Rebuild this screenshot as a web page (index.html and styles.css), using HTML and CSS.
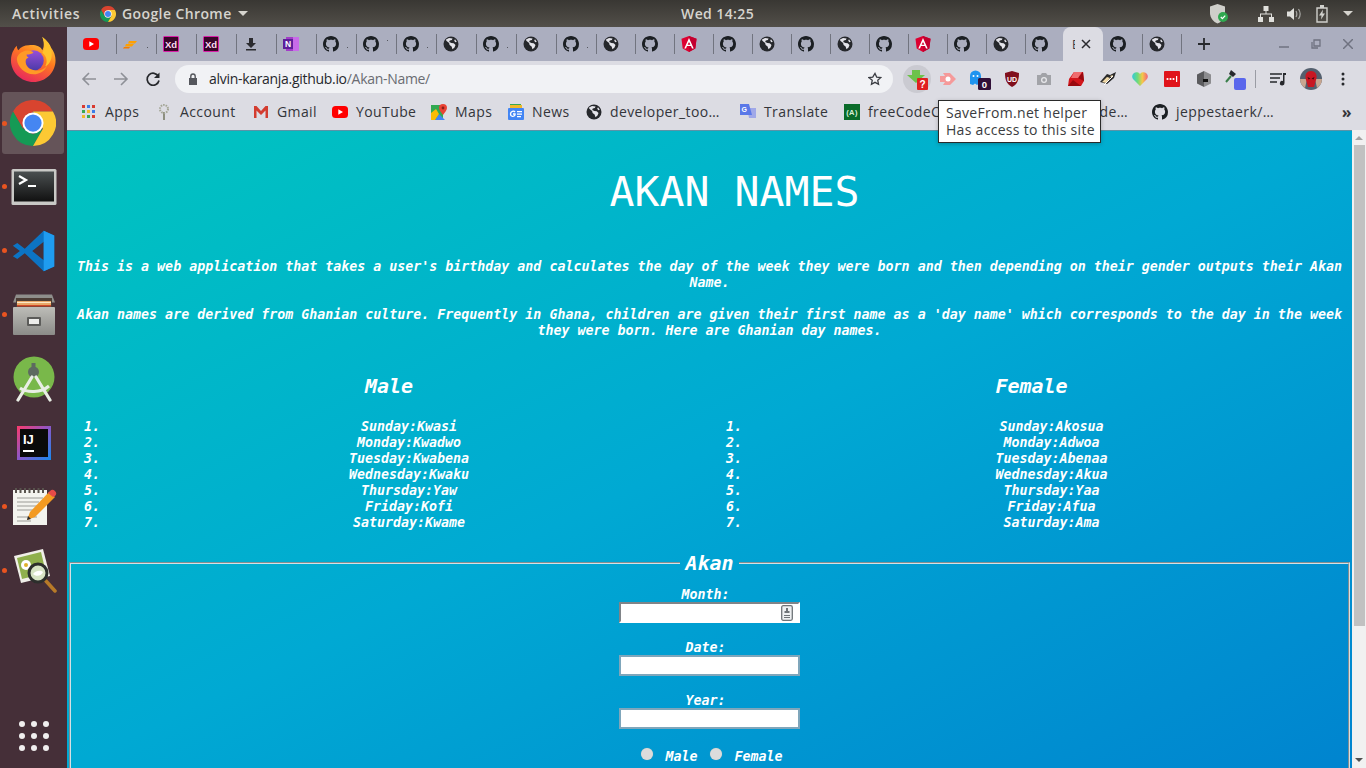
FILE: index.html
```html
<!DOCTYPE html>
<html lang="en">

<head>
    <meta charset="UTF-8">
    <meta name="viewport" content="width=device-width, initial-scale=1.0">
    <title>Akan Names</title>
    <link rel="stylesheet" href="styles.css">
</head>

<body>
    <!-- shared icons -->
    <svg class="icon-defs" aria-hidden="true">
        <defs>
            <symbol id="gh" viewBox="0 0 16 16">
                <path fill="#1b1f23" d="M8 0C3.58 0 0 3.58 0 8c0 3.54 2.29 6.53 5.47 7.59.4.07.55-.17.55-.38 0-.19-.01-.82-.01-1.49-2.01.37-2.53-.49-2.69-.94-.09-.23-.48-.94-.82-1.13-.28-.15-.68-.52-.01-.53.63-.01 1.08.58 1.23.82.72 1.21 1.87.87 2.33.66.07-.52.28-.87.51-1.07-1.78-.2-3.64-.89-3.64-3.95 0-.87.31-1.59.82-2.15-.08-.2-.36-1.02.08-2.12 0 0 .67-.21 2.2.82.64-.18 1.32-.27 2-.27.68 0 1.36.09 2 .27 1.53-1.04 2.2-.82 2.2-.82.44 1.1.16 1.92.08 2.12.51.56.82 1.27.82 2.15 0 3.07-1.87 3.75-3.65 3.95.29.25.54.73.54 1.48 0 1.07-.01 1.93-.01 2.2 0 .21.15.46.55.38A8.013 8.013 0 0016 8c0-4.42-3.58-8-8-8z" />
            </symbol>
            <symbol id="globe" viewBox="0 0 16 16">
                <circle cx="8" cy="8" r="7.5" fill="#26282c" />
                <path fill="#e4e4ea" d="M3 3.5l3-1.6 3.6.5-.8 1.7-2 .3-.6 1.6 2.2 1.1 2.3.2 1.8 1.6-1 2.7-2 1.6-.9-2.7-2-1.4-.5-2.2L3.300 4.800zM12 3.200l1.800 2.600-1.600.4-1-1.800z" />
            </symbol>
            <symbol id="xd" viewBox="0 0 16 16">
                <rect width="16" height="16" rx="1.500" fill="#d81fa8" />
                <rect x="1" y="1" width="14" height="14" fill="#3a0529" />
                <text x="8" y="11.500" text-anchor="middle" font-family="Liberation Sans, sans-serif" font-size="9.500" font-weight="700" fill="#ffd9f2">Xd</text>
            </symbol>
            <symbol id="angular" viewBox="0 0 16 16">
                <path fill="#dd0031" d="M8 0L.5 2.700l1.200 9.800L8 16l6.300-3.500 1.200-9.800z" />
                <path fill="#c3002f" d="M8 0v16l6.300-3.500 1.200-9.800z" />
                <path fill="#fff" d="M8 2L3.300 12.400h1.700l1-2.300h4l1 2.300h1.700zm0 3.900l1.400 2.900H6.600z" />
            </symbol>
            <symbol id="youtube" viewBox="0 0 16 16">
                <rect y="2" width="16" height="12" rx="3.500" fill="#f00" />
                <path fill="#fff" d="M6.300 5.200L11 8l-4.700 2.800z" />
            </symbol>
            <symbol id="chrome" viewBox="0 0 48 48">
                <path fill="#d8442f" d="M3.200 12A24 24 0 0 1 44.800 12L24 12 13.600 30z" />
                <path fill="#159a55" d="M3.200 12L13.600 30 24 36 34.400 30 24 48A24 24 0 0 1 3.200 12z" />
                <path fill="#fcc934" d="M44.800 12L24 12 34.400 30 24 48A24 24 0 0 0 44.800 12z" />
                <circle cx="24" cy="24" r="11" fill="#fff" />
                <circle cx="24" cy="24" r="9" fill="#4586f2" />
            </symbol>
        </defs>
    </svg>

    <header class="topbar">
        <span class="topbar-item activities">Activities</span>
        <svg class="app-chrome" width="16" height="16"><use href="#chrome" /></svg>
        <span class="topbar-item">Google Chrome</span>
        <span class="caret"></span>
        <span class="clock">Wed 14:25</span>
        <div class="tray">
            <svg class="tray-shield" width="20" height="22" viewBox="0 0 20 22">
                <path fill="#cfcfca" d="M8.500 1L1 3.500V10c0 5 3.500 9 7.500 10.500 1.500-.5 3-1.500 4-3L16 10V3.500z" />
                <circle cx="14" cy="14" r="5" fill="#2fa84f" />
                <path fill="none" stroke="#fff" stroke-width="1.300" d="M11.800 14l1.600 1.600 2.800-3" />
            </svg>
            <svg class="tray-net" width="16" height="16" viewBox="0 0 16 16">
                <path fill="#e0e0dc" d="M5.500 0h5v5h-2v2.500H14V11h2v5h-5v-5h2V8.500H3V11h2v5H0v-5h2V7.500h5.500V5h-2z" />
            </svg>
            <svg class="tray-vol" width="16" height="16" viewBox="0 0 16 16">
                <path fill="#e0e0dc" d="M1 5.500h3L8 2v12l-4-3.500H1z" />
                <path fill="none" stroke="#a9a9a5" stroke-width="1.200" d="M10 5c1 1.800 1 4.200 0 6M12.500 3c2 3 2 7 0 10" />
            </svg>
            <svg class="tray-bat" width="12" height="18" viewBox="0 0 12 18">
                <path fill="none" stroke="#d0d0cc" stroke-width="1.400" d="M1 3h10v14H1z" />
                <path fill="#d0d0cc" d="M4 0h4v3H4zM7 4.500L3 10.500h2.500L5 14.500l4-6H6.500z" />
            </svg>
            <span class="caret caret-tray"></span>
        </div>
    </header>

    <div class="desktop">
        <nav class="dock">
            <div class="dock-item">
                <svg width="47" height="47" viewBox="0 0 48 48">
                    <defs>
                        <linearGradient id="ffBody" x1="0.800" y1="0" x2="0.300" y2="1">
                            <stop offset="0" stop-color="#ffe03a" />
                            <stop offset="0.450" stop-color="#ff7a1f" />
                            <stop offset="1" stop-color="#e8265e" />
                        </linearGradient>
                        <linearGradient id="ffCore" x1="0.500" y1="0" x2="0.500" y2="1">
                            <stop offset="0" stop-color="#9a4fd8" />
                            <stop offset="1" stop-color="#4a3aa8" />
                        </linearGradient>
                    </defs>
                    <path fill="url(#ffBody)" d="M33 1c5 3.500 8 8 9 11 3 4 4.500 8 4.500 13 0 12-10 22-22.500 22C11.500 47 1 37 1 25c0-4 1-8 3-11 1-2 2-3 3-4 0 2 .5 3.500 1.500 4.500C11 11 15 9.500 19 9.500c5-1 12 0 14 5 2-3 2-8 0-13.500z" />
                    <circle cx="24" cy="25" r="10.500" fill="url(#ffCore)" />
                    <path fill="#ff9a26" d="M7 24c1 8 8 15 17 15 7 0 12-4 14-9-3 4-8 6-13 5-6-1-9-5-9-9 0-2 1-3 3-4-2-1-2-2-2-3 3 0 5-1 7-2-2-2-7-3-11-1-3 1-6 4-6 8z" />
                    <path fill="#ffc22c" d="M33 1c3 6 3 12 0 16 4 3 6 9 3 14 5-2 8-9 6-17-1-5-5-10-9-13z" />
                </svg>
            </div>
            <div class="dock-item dock-active dock-running">
                <svg width="46" height="46"><use href="#chrome" /></svg>
            </div>
            <div class="dock-item dock-running">
                <svg width="46" height="46" viewBox="0 0 46 46">
                    <defs>
                        <linearGradient id="termBg" x1="0" y1="0" x2="0" y2="1">
                            <stop offset="0" stop-color="#4a4f50" />
                            <stop offset="1" stop-color="#111" />
                        </linearGradient>
                    </defs>
                    <rect x="0.500" y="5" width="45" height="36" rx="1.500" fill="#c9c9c6" />
                    <rect x="3" y="7.500" width="40" height="30" fill="url(#termBg)" />
                    <path fill="none" stroke="#fff" stroke-width="2.200" d="M8 12l7 4-7 4" />
                    <path fill="none" stroke="#fff" stroke-width="2" d="M17 22h8" />
                </svg>
            </div>
            <div class="dock-item dock-running">
                <svg width="44" height="44" viewBox="0 0 100 100">
                    <path fill="#0c74c4" fill-rule="evenodd" d="M72 4L29 45 12 32 2 38l16 12L2 62l10 6 17-13 43 41 24-11V15zM72 29v42L46 50z" />
                    <path fill="#1f9cf0" d="M72 4l24 11v70L72 96z" />
                </svg>
            </div>
            <div class="dock-item dock-running">
                <svg width="44" height="44" viewBox="0 0 44 44">
                    <defs>
                        <linearGradient id="filesBody" x1="0" y1="0" x2="0" y2="1">
                            <stop offset="0" stop-color="#bdbdb8" />
                            <stop offset="1" stop-color="#8b8b88" />
                        </linearGradient>
                    </defs>
                    <path fill="#8e8e8b" d="M4 1.500h36l3 8H1z" />
                    <rect x="4" y="5" width="36" height="10" fill="#4c3d36" />
                    <rect x="5" y="8" width="34" height="5" fill="#e8a868" />
                    <path fill="#fbe8c8" d="M5 9h34v1H5z" />
                    <path fill="#d04a2a" d="M5 12h34v1.500H5z" />
                    <rect x="1" y="14" width="42" height="28" rx="1" fill="url(#filesBody)" />
                    <rect x="15" y="24" width="14" height="9" rx="1" fill="#5c5c5a" />
                    <rect x="17" y="26" width="10" height="5" fill="#ececea" />
                </svg>
            </div>
            <div class="dock-item">
                <svg width="42" height="46" viewBox="0 0 42 46">
                    <circle cx="21" cy="21" r="20.500" fill="#79b84a" />
                    <circle cx="20.500" cy="16" r="5.500" fill="#5d6a60" />
                    <rect x="18.500" y="7" width="4" height="5" fill="#5d6a60" />
                    <path fill="none" stroke="#e9eee5" stroke-width="3.200" stroke-linecap="round" d="M19 21L5 44M23 21l14 23" />
                    <path fill="none" stroke="#e9eee5" stroke-width="3" d="M7 32c7 5 21 5 29-2" />
                </svg>
            </div>
            <div class="dock-item">
                <svg width="34" height="34" viewBox="0 0 34 34">
                    <defs>
                        <linearGradient id="ijEdge" x1="0" y1="0" x2="1" y2="1">
                            <stop offset="0" stop-color="#fc3a6b" />
                            <stop offset="0.500" stop-color="#8a57c9" />
                            <stop offset="1" stop-color="#1689ee" />
                        </linearGradient>
                    </defs>
                    <rect width="34" height="34" fill="url(#ijEdge)" />
                    <rect x="3" y="3" width="28" height="28" fill="#0a0a0a" />
                    <text x="6" y="18" font-family="Liberation Sans, sans-serif" font-size="13" font-weight="700" fill="#fff">IJ</text>
                    <rect x="6" y="24" width="11" height="2" fill="#fff" />
                </svg>
            </div>
            <div class="dock-item dock-running">
                <svg width="46" height="40" viewBox="0 0 46 40">
                    <path fill="#f3f3ee" d="M2 3h34v35H2z" />
                    <path fill="#58534d" d="M4 1h2v5H4zM8.500 1h2v5h-2zM13 1h2v5h-2zM17.500 1h2v5h-2zM22 1h2v5h-2zM26.500 1h2v5h-2zM31 1h2v5h-2z" />
                    <path fill="none" stroke="#9b9b96" stroke-width="1" d="M6 11h26M6 15h22M6 19h24M6 23h16M6 30h20M6 34h14" />
                    <path fill="#f39a22" d="M38 5l6 5-20 20-8 3 3-8z" />
                    <path fill="#e84a48" d="M39 4a3 3 0 0 1 5 5l-2 1-5-4z" />
                    <path fill="#2a2a2a" d="M16 33l1-4 3 3z" />
                </svg>
            </div>
            <div class="dock-item dock-running">
                <svg width="46" height="46" viewBox="0 0 46 46">
                    <path fill="#f0efe8" d="M3 8L32 1l7 27-29 7z" />
                    <path fill="#8fb04c" d="M6 10l24-6 5 21-24 6z" />
                    <circle cx="15" cy="17" r="5" fill="#fff" />
                    <circle cx="15" cy="17" r="2" fill="#e0b12c" />
                    <path fill="none" stroke="#b77a28" stroke-width="3.500" stroke-linecap="round" d="M35 33l9 10" />
                    <circle cx="27" cy="25" r="9" fill="#d7e4c4" stroke="#2c2f2c" stroke-width="3" />
                    <path fill="#fff" d="M22 26c3-4 8-4 10-2-1 4-7 5-10 2z" />
                </svg>
            </div>
            <div class="dock-apps">
                <span class="dot"></span><span class="dot"></span><span class="dot"></span>
                <span class="dot"></span><span class="dot"></span><span class="dot"></span>
                <span class="dot"></span><span class="dot"></span><span class="dot"></span>
            </div>
        </nav>

        <div class="browser">
            <div class="tabstrip">
                <div class="tab tab-first"><svg class="tab-icon"><use href="#youtube" /></svg></div>
                <div class="tab">
                    <svg class="tab-icon" viewBox="0 0 16 16"><path fill="#ffa000" d="M6 5h8l-2 2.500H5zM3 8h8l-2 2.500H2z" /><path fill="#f57c00" d="M1 11h6l-1 1.500H0z" /></svg>
                    <span class="tab-dot"></span>
                </div>
                <div class="tab"><svg class="tab-icon"><use href="#xd" /></svg></div>
                <div class="tab"><svg class="tab-icon"><use href="#xd" /></svg></div>
                <div class="tab">
                    <svg class="tab-icon" viewBox="0 0 16 16"><path fill="#2b2b2f" d="M6 2h4v5h3l-5 5-5-5h3zM3 13h10v1.500H3z" /></svg>
                </div>
                <div class="tab">
                    <svg class="tab-icon" viewBox="0 0 16 16"><rect x="3" y="1" width="13" height="14" fill="#a33cc8" /><rect x="10" y="1" width="6" height="14" fill="#c86be8" /><rect y="3" width="10" height="10" fill="#5e1f9a" /><text x="5" y="11" text-anchor="middle" font-family="Liberation Sans, sans-serif" font-size="8.500" font-weight="700" fill="#fff">N</text></svg>
                </div>
                <div class="tab"><svg class="tab-icon"><use href="#gh" /></svg><span class="tab-dot"></span></div>
                <div class="tab"><svg class="tab-icon"><use href="#gh" /></svg><span class="tab-dot tab-dot-high"></span></div>
                <div class="tab"><svg class="tab-icon"><use href="#gh" /></svg><span class="tab-dot"></span></div>
                <div class="tab"><svg class="tab-icon"><use href="#globe" /></svg></div>
                <div class="tab"><svg class="tab-icon"><use href="#gh" /></svg><span class="tab-dot"></span></div>
                <div class="tab"><svg class="tab-icon"><use href="#globe" /></svg></div>
                <div class="tab"><svg class="tab-icon"><use href="#gh" /></svg><span class="tab-dot"></span></div>
                <div class="tab tab-narrow"><svg class="tab-icon"><use href="#globe" /></svg></div>
                <div class="tab tab-narrow"><svg class="tab-icon"><use href="#gh" /></svg></div>
                <div class="tab tab-narrow"><svg class="tab-icon"><use href="#angular" /></svg></div>
                <div class="tab tab-narrow"><svg class="tab-icon"><use href="#gh" /></svg></div>
                <div class="tab tab-narrow"><svg class="tab-icon"><use href="#globe" /></svg></div>
                <div class="tab tab-narrow"><svg class="tab-icon"><use href="#gh" /></svg></div>
                <div class="tab tab-narrow"><svg class="tab-icon"><use href="#globe" /></svg></div>
                <div class="tab tab-narrow"><svg class="tab-icon"><use href="#gh" /></svg></div>
                <div class="tab tab-narrow"><svg class="tab-icon"><use href="#angular" /></svg></div>
                <div class="tab tab-narrow"><svg class="tab-icon"><use href="#gh" /></svg></div>
                <div class="tab tab-narrow"><svg class="tab-icon"><use href="#globe" /></svg></div>
                <div class="tab tab-narrow tab-before-active"><svg class="tab-icon"><use href="#gh" /></svg></div>
                <div class="tab-active">
                    <span class="tab-title">B</span>
                    <svg class="tab-close" width="10" height="10" viewBox="0 0 10 10"><path stroke="#2b2b2f" stroke-width="1.500" d="M1 1l8 8M9 1L1 9" /></svg>
                </div>
                <div class="tab tab-narrow tab-first"><svg class="tab-icon"><use href="#gh" /></svg></div>
                <div class="tab tab-narrow"><svg class="tab-icon"><use href="#globe" /></svg></div>
                <div class="tab-new">
                    <svg width="12" height="12" viewBox="0 0 12 12"><path stroke="#26282c" stroke-width="1.800" d="M6 0v12M0 6h12" /></svg>
                </div>
                <div class="window-controls">
                    <svg width="10" height="10" viewBox="0 0 10 10"><path stroke="#6f7280" stroke-width="1.500" d="M0 8h10" /></svg>
                    <svg width="10" height="10" viewBox="0 0 10 10"><path fill="none" stroke="#6f7280" stroke-width="1.300" d="M3 1h6v6H3zM1 3v6h6" /></svg>
                    <svg width="10" height="10" viewBox="0 0 10 10"><path stroke="#6f7280" stroke-width="1.500" d="M0 0l10 10M10 0L0 10" /></svg>
                </div>
            </div>

            <div class="toolbar">
                <svg class="nav-btn" width="16" height="16" viewBox="0 0 16 16"><path fill="none" stroke="#8e9097" stroke-width="1.600" d="M15 8H2M8 2L2 8l6 6" /></svg>
                <svg class="nav-btn" width="16" height="16" viewBox="0 0 16 16"><path fill="none" stroke="#8e9097" stroke-width="1.600" d="M1 8h13M8 2l6 6-6 6" /></svg>
                <svg class="nav-btn" width="16" height="16" viewBox="0 0 16 16"><path fill="none" stroke="#26282c" stroke-width="1.700" d="M13.500 5.500A6 6 0 1 0 14 9.500" /><path fill="#26282c" d="M14.500 1.500v5.500H9z" /></svg>
                <div class="omnibox">
                    <svg width="10" height="12" viewBox="0 0 10 12"><path fill="#55575d" d="M1 5h8v7H1z" /><path fill="none" stroke="#55575d" stroke-width="1.400" d="M2.800 5V3.200a2.200 2.200 0 0 1 4.400 0V5" /></svg>
                    <span class="url"><span class="url-host">alvin-karanja.github.io</span>/Akan-Name/</span>
                    <svg class="omnibox-star" width="14" height="14" viewBox="0 0 24 24"><path fill="none" stroke="#3a3c42" stroke-width="2.200" d="M12 2.500l2.900 6.300 6.900.8-5.100 4.700 1.400 6.800-6.100-3.400-6.100 3.400 1.400-6.800L1.200 9.600l6.900-.8z" /></svg>
                </div>
                <div class="extensions">
                    <div class="ext ext-hover">
                        <svg width="22" height="22" viewBox="0 0 22 22"><path fill="#6cc24a" d="M6 2h8v5h5l-9 8-9-8h5z" /><rect x="11" y="10" width="11" height="12" rx="1" fill="#e01f1f" /><text x="16.500" y="20" text-anchor="middle" font-family="Liberation Sans, sans-serif" font-size="10" font-weight="700" fill="#fff">?</text></svg>
                    </div>
                    <div class="ext">
                        <svg width="18" height="14" viewBox="0 0 18 14"><path fill="#f59a9a" d="M4 1h7l6 6-6 6H4l2-3H1V4h5z" /><circle cx="9" cy="7" r="2.500" fill="#fff" /></svg>
                    </div>
                    <div class="ext">
                        <svg width="22" height="22" viewBox="0 0 22 22"><path fill="#1f94f0" d="M1 8a5.500 5.500 0 0 1 11 0v9l-2-1.500L8 17l-2-1.500L4 17l-3-1z" /><circle cx="4.500" cy="8" r="1" fill="#fff" /><circle cx="8.500" cy="8" r="1" fill="#fff" /><rect x="9" y="10" width="13" height="12" rx="1.500" fill="#311038" /><text x="15.500" y="19.500" text-anchor="middle" font-family="Liberation Sans, sans-serif" font-size="9.500" font-weight="700" fill="#fff">0</text></svg>
                    </div>
                    <div class="ext">
                        <svg width="16" height="16" viewBox="0 0 16 16"><path fill="#800f1c" d="M8 0l7 2c0 7-1.500 11-7 14C2.500 13 1 9 1 2z" /><text x="8" y="10.500" text-anchor="middle" font-family="Liberation Sans, sans-serif" font-size="7" font-weight="700" fill="#fff">UD</text></svg>
                    </div>
                    <div class="ext">
                        <svg width="16" height="14" viewBox="0 0 16 14"><path fill="#a2a3a8" d="M1 3h3.500L6 1h4l1.500 2H15v10H1z" /><circle cx="8" cy="8" r="3" fill="#e8e8ec" /><circle cx="8" cy="8" r="1.700" fill="#a2a3a8" /></svg>
                    </div>
                    <div class="ext">
                        <svg width="18" height="16" viewBox="0 0 18 16"><path fill="#d2161c" d="M7 1h9l1 9-3 5H1l1-7z" /><path fill="#99090f" d="M16 1l1 9-6-3zM1 15l5-6 8 6z" /><path fill="#ef6d6f" d="M7 1L4 7l7 0 4-6z" /></svg>
                    </div>
                    <div class="ext">
                        <svg width="18" height="14" viewBox="0 0 18 14"><path fill="#2a2a2a" d="M1 10l7-8 3 1 6-3-2 6-7 6z" /><path fill="#f0d9a8" d="M3 10l5-5 3 1-4 5zM11 4l3-1-1 3z" /><path stroke="#fff" d="M5 13l9-9" /></svg>
                    </div>
                    <div class="ext">
                        <svg width="16" height="16" viewBox="0 0 16 16"><defs><linearGradient id="heart" x1="0" y1="0" x2="1" y2="0"><stop offset="0" stop-color="#35c9d9" /><stop offset="0.350" stop-color="#6edb7a" /><stop offset="0.650" stop-color="#f5c84a" /><stop offset="1" stop-color="#f2617d" /></linearGradient></defs><path fill="url(#heart)" d="M8 15L1 8a4 4 0 0 1 7-5 4 4 0 0 1 7 5z" /></svg>
                    </div>
                    <div class="ext">
                        <svg width="16" height="16" viewBox="0 0 16 16"><rect width="16" height="16" rx="1" fill="#e0131a" /><circle cx="3.500" cy="8" r="1.100" fill="#fff" /><circle cx="6.500" cy="8" r="1.100" fill="#fff" /><circle cx="9.500" cy="8" r="1.100" fill="#fff" /><rect x="12" y="5" width="1.200" height="6" fill="#fff" /></svg>
                    </div>
                    <div class="ext">
                        <svg width="14" height="16" viewBox="0 0 14 16"><path fill="#8d8d90" d="M7 0l7 3.500v9L7 16z" /><path fill="#5b5b5e" d="M7 0L0 3.500v9L7 16z" /><rect x="6" y="8" width="5" height="3" fill="#111" /></svg>
                    </div>
                    <div class="ext">
                        <svg width="22" height="22" viewBox="0 0 22 22"><path stroke="#3a7f4a" stroke-width="2" d="M1 14l5-6" /><path fill="#27282c" d="M6 2l5 4-3 3-4-3z" /><rect x="9" y="10" width="12" height="12" rx="2" fill="#5a67ec" /></svg>
                    </div>
                </div>
                <span class="toolbar-sep"></span>
                <svg class="queue" width="16" height="14" viewBox="0 0 16 14"><path stroke="#26282c" stroke-width="1.500" d="M0 2h12M0 6h10M0 10h7" /><path fill="#26282c" d="M13 1h3v2h-1.500v8a2.300 2.300 0 1 1-1.500-2z" /></svg>
                <svg class="avatar" width="22" height="22" viewBox="0 0 22 22">
                    <circle cx="11" cy="11" r="11" fill="#54606e" />
                    <path fill="#c8a690" d="M0 11a11 11 0 0 0 5 9l2-9zM22 11a11 11 0 0 1-5 9l-2-9z" />
                    <path fill="#c81722" d="M11 3c4 0 6 3 5.500 7L14 19h-6L5.500 10C5 6 7 3 11 3z" />
                    <path fill="#3e0a10" d="M7.500 9l3 1.500-2 1zM14.500 9l-3 1.500 2 1z" />
                </svg>
                <svg class="kebab" width="4" height="14" viewBox="0 0 4 14"><circle cx="2" cy="2" r="1.500" fill="#26282c" /><circle cx="2" cy="7" r="1.500" fill="#26282c" /><circle cx="2" cy="12" r="1.500" fill="#26282c" /></svg>
            </div>

            <div class="bookmarks">
                <div class="bm bm-apps-item">
                    <svg width="14" height="14" viewBox="0 0 14 14">
                        <path fill="#d93a30" d="M0 0h3v3H0z" /><path fill="#3a7de8" d="M5 0h3v3H5z" /><path fill="#d93a30" d="M10 0h3v3h-3z" />
                        <path fill="#39a852" d="M0 5h3v3H0z" /><path fill="#f0b92a" d="M5 5h3v3H5z" /><path fill="#3a7de8" d="M10 5h3v3h-3z" />
                        <path fill="#f0b92a" d="M0 10h3v3H0z" /><path fill="#39a852" d="M5 10h3v3H5z" /><path fill="#d93a30" d="M10 10h3v3h-3z" />
                    </svg>
                    <span class="bm-apps">Apps</span>
                </div>
                <div class="bm">
                    <svg width="16" height="16" viewBox="0 0 16 16"><path fill="#8d8f80" d="M7 8h2v8H7z" /><circle cx="8" cy="5" r="4" fill="none" stroke="#a3a595" stroke-width="2" stroke-dasharray="1.500 1" /></svg>
                    <span class="bm-account">Account</span>
                </div>
                <div class="bm">
                    <svg width="16" height="16" viewBox="0 0 16 16"><path fill="#d33c30" d="M1 2h2.500L8 7l4.500-5H15v12h-2.500V6.500L8 11 3.500 6.500V14H1z" /></svg>
                    <span class="bm-gmail">Gmail</span>
                </div>
                <div class="bm">
                    <svg width="16" height="16"><use href="#youtube" /></svg>
                    <span class="bm-youtube">YouTube</span>
                </div>
                <div class="bm">
                    <svg width="16" height="16" viewBox="0 0 16 16"><path fill="#31a952" d="M0 1h12v15H0z" /><path fill="#4285f4" d="M4 16l4-6 6 6z" /><path fill="#fbbc04" d="M0 9l5-4 3 5-4 6H0z" /><path fill="#ea4335" d="M12 0a4 4 0 0 1 4 4c0 2-2 4-4 7-2-3-4-5-4-7a4 4 0 0 1 4-4z" /><circle cx="12" cy="4" r="1.400" fill="#8c1f18" /></svg>
                    <span class="bm-maps">Maps</span>
                </div>
                <div class="bm">
                    <svg width="16" height="16" viewBox="0 0 16 16"><path fill="#39a852" d="M2 0h11v3H2z" /><path fill="#f0b92a" d="M2 1h12v3H2z" /><rect y="4" width="16" height="12" rx="1" fill="#4285f4" /><path fill="#fff" d="M9 7h5v1.300H9zM9 9.500h5v1.300H9zM9 12h4v1.300H9z" /><path fill="none" stroke="#fff" stroke-width="1.400" d="M7 8c-1-1.500-4.500-1-4.500 2S6 13 7 11V10H5" /></svg>
                    <span class="bm-news">News</span>
                </div>
                <div class="bm">
                    <svg width="16" height="16"><use href="#globe" /></svg>
                    <span class="bm-dev">developer_too…</span>
                </div>
                <div class="bm">
                    <svg width="16" height="16" viewBox="0 0 16 16"><path fill="#a0a8e8" d="M7 4h9v10H9z" /><path fill="#5a78e8" d="M0 0h9l3 11H0z" /><text x="4.500" y="8" text-anchor="middle" font-family="Liberation Sans, sans-serif" font-size="7" font-weight="700" fill="#fff">G</text></svg>
                    <span class="bm-translate">Translate</span>
                </div>
                <div class="bm">
                    <svg width="16" height="16" viewBox="0 0 16 16"><rect width="16" height="16" fill="#0a6b2a" /><text x="8" y="11" text-anchor="middle" font-family="Liberation Sans, sans-serif" font-size="7.500" font-weight="700" fill="#d8f0d8">(A)</text></svg>
                    <span class="bm-fcc">freeCodeCamp</span>
                </div>
                <div class="bm">
                    <span class="bm-code">Code…</span>
                </div>
                <div class="bm">
                    <svg width="16" height="16"><use href="#gh" /></svg>
                    <span class="bm-jeppe">jeppestaerk/…</span>
                </div>
                <span class="bm-more">»</span>
            </div>

            <div class="viewport">
                <main class="page">
                    <h1 class="page-title">AKAN NAMES</h1>
                    <p class="intro">This is a web application that takes a user's birthday and calculates the day of the week they were born and then depending on their gender outputs their Akan Name.</p>
                    <p class="intro">Akan names are derived from Ghanian culture. Frequently in Ghana, children are given their first name as a 'day name' which corresponds to the day in the week they were born. Here are Ghanian day names.</p>

                    <section class="names">
                        <div class="names-col">
                            <h2 class="names-title">Male</h2>
                            <ol class="names-list">
                                <li>Sunday:Kwasi</li>
                                <li>Monday:Kwadwo</li>
                                <li>Tuesday:Kwabena</li>
                                <li>Wednesday:Kwaku</li>
                                <li>Thursday:Yaw</li>
                                <li>Friday:Kofi</li>
                                <li>Saturday:Kwame</li>
                            </ol>
                        </div>
                        <div class="names-col">
                            <h2 class="names-title">Female</h2>
                            <ol class="names-list">
                                <li>Sunday:Akosua</li>
                                <li>Monday:Adwoa</li>
                                <li>Tuesday:Abenaa</li>
                                <li>Wednesday:Akua</li>
                                <li>Thursday:Yaa</li>
                                <li>Friday:Afua</li>
                                <li>Saturday:Ama</li>
                            </ol>
                        </div>
                    </section>

                    <form class="akan-form">
                        <fieldset class="akan-fieldset">
                            <legend class="akan-legend">Akan</legend>
                            <label class="field-label" for="month">Month:</label>
                            <div class="field-wrap">
                                <input class="field field-month" id="month" type="text">
                                <svg class="autofill-icon" width="12" height="16" viewBox="0 0 12 16">
                                    <rect x="0.700" y="0.700" width="10.600" height="14.600" rx="1.500" fill="#eef0f2" stroke="#6f7478" stroke-width="1.300" />
                                    <path fill="#6f7478" d="M5 3h2v3h1.500v2h-5V6H5zM3 10h6v1H3zM3 12h6v1H3z" />
                                </svg>
                            </div>
                            <label class="field-label" for="date">Date:</label>
                            <input class="field" id="date" type="text">
                            <label class="field-label" for="year">Year:</label>
                            <input class="field" id="year" type="text">
                            <div class="gender-row">
                                <input class="gender-radio" type="radio" name="gender" id="male">
                                <label class="gender-label" for="male">Male</label>
                                <input class="gender-radio" type="radio" name="gender" id="female">
                                <label class="gender-label" for="female">Female</label>
                            </div>
                        </fieldset>
                    </form>
                </main>
                <div class="scrollbar">
                    <span class="scroll-up"></span>
                    <span class="scroll-thumb"></span>
                    <span class="scroll-down"></span>
                </div>
            </div>

            <div class="tooltip">SaveFrom.net helper<br>Has access to this site</div>
        </div>
    </div>
</body>

</html>
```

FILE: styles.css
```css
* {
    box-sizing: border-box;
}

html,
body {
    margin: 0;
    height: 100%;
    overflow: hidden;
}

body {
    display: flex;
    flex-direction: column;
    width: 1366px;
    height: 768px;
    font-family: "Open Sans", sans-serif;
}

svg {
    display: block;
    flex-shrink: 0;
}

.icon-defs {
    position: absolute;
    width: 0;
    height: 0;
}

/* top bar */
.topbar {
    position: relative;
    display: flex;
    align-items: center;
    height: 27px;
    flex-shrink: 0;
    padding-left: 12px;
    background: linear-gradient(#393733, #524f49);
    color: #d6d4ce;
    font-size: 14px;
    font-weight: 600;
}

.topbar-item {
    letter-spacing: 0.4px;
}

.activities {
    width: 88px;
    letter-spacing: 0.7px;
}

.app-chrome {
    margin: 0 6px 0 0;
}

.caret {
    width: 0;
    height: 0;
    margin-left: 6px;
    border-left: 5px solid transparent;
    border-right: 5px solid transparent;
    border-top: 5px solid #d6d4ce;
}

.clock {
    position: absolute;
    left: 681px;
    letter-spacing: 0.4px;
}

.tray {
    display: flex;
    align-items: center;
    margin-left: auto;
}

.tray-shield {
    margin-right: 29px;
}

.tray-net {
    margin-right: 12px;
}

.tray-vol {
    margin-right: 14px;
}

.tray-bat {
    margin-right: 9px;
}

.caret-tray {
    margin: 0 13px 0 6px;
}

/* desktop */
.desktop {
    display: flex;
    flex: 1;
    min-height: 0;
}

.dock {
    display: flex;
    flex-direction: column;
    width: 67px;
    flex-shrink: 0;
    background: #452f38;
}

.dock-item {
    position: relative;
    display: flex;
    align-items: center;
    justify-content: center;
    height: 64px;
    margin-left: 0;
}

.dock-active {
    margin: 1px 3px 1px 2px;
    height: 62px;
    padding-right: 1px;
    background: #655459;
    border-radius: 3px;
}

.dock-running::before {
    content: "";
    position: absolute;
    left: 2px;
    top: 29px;
    width: 5px;
    height: 5px;
    border-radius: 50%;
    background: #e95420;
}

.dock-active::before {
    left: 0;
}

.dock-apps {
    display: grid;
    grid-template-columns: repeat(3, 6px);
    gap: 6px;
    justify-content: center;
    margin-top: auto;
    padding-bottom: 17px;
}

.dot {
    width: 6px;
    height: 6px;
    border-radius: 50%;
    background: #f0eeee;
}

/* browser */
.browser {
    position: relative;
    display: flex;
    flex-direction: column;
    flex: 1;
    min-width: 0;
}

.tabstrip {
    display: flex;
    align-items: center;
    height: 34px;
    flex-shrink: 0;
    padding-left: 9px;
    background: #abaebf;
}

.tab {
    position: relative;
    display: flex;
    align-items: center;
    width: 40px;
    height: 20px;
    flex-shrink: 0;
    padding-left: 6px;
    border-left: 1px solid #71747f;
}

.tab-narrow {
    width: 39px;
}

.tab-first {
    border-left-color: transparent;
}

.tab-icon {
    width: 16px;
    height: 16px;
}

.tab-dot {
    width: 1px;
    height: 1px;
    margin: 7px 0 0 8px;
    background: #55575f;
}

.tab-dot-high {
    margin-top: -8px;
}

.tab-active {
    display: flex;
    align-items: center;
    align-self: stretch;
    width: 40px;
    flex-shrink: 0;
    margin-left: -1px;
    padding-left: 9px;
    background: #dcdce3;
    border-radius: 8px 8px 0 0;
}

.tab-title {
    width: 3px;
    margin-right: 6px;
    overflow: hidden;
    font-size: 12px;
    color: #3a3c42;
}

.tab-new {
    display: flex;
    align-items: center;
    height: 20px;
    padding-left: 16px;
    border-left: 1px solid #71747f;
}

.window-controls {
    display: flex;
    gap: 22px;
    margin-left: auto;
    padding-right: 13px;
}

/* toolbar */
.toolbar {
    display: flex;
    align-items: center;
    height: 35px;
    flex-shrink: 0;
    padding-left: 14px;
    background: #dcdce3;
}

.nav-btn {
    margin-right: 16px;
}

.omnibox {
    display: flex;
    align-items: center;
    width: 718px;
    height: 28px;
    flex-shrink: 0;
    margin-left: -2px;
    padding: 0 11px 0 13px;
    border-radius: 14px;
    background: #f1f2f5;
}

.url {
    margin-left: 11px;
    font-size: 14px;
    letter-spacing: -0.3px;
    color: #6a6c72;
    white-space: nowrap;
}

.url-host {
    color: #26282c;
}

.omnibox-star {
    margin-left: auto;
}

.extensions {
    display: flex;
    align-items: center;
    margin-left: 10px;
}

.ext {
    display: flex;
    align-items: center;
    justify-content: center;
    width: 32px;
    height: 28px;
}

.ext-hover {
    width: 28px;
    margin-right: 1px;
    border-radius: 50%;
    background: #cacad1;
}

.toolbar-sep {
    width: 1px;
    height: 18px;
    margin-left: 3px;
    background: #9a9ca4;
}

.queue {
    margin-left: 14px;
}

.avatar {
    margin-left: 14px;
}

.kebab {
    margin-left: 19px;
}

/* bookmarks */
.bookmarks {
    display: flex;
    align-items: center;
    gap: 16px;
    height: 34px;
    flex-shrink: 0;
    padding: 0 0 3px 15px;
    background: #dcdce3;
    color: #33353a;
    font-size: 14px;
    letter-spacing: 0.4px;
}

.bm {
    display: flex;
    align-items: center;
    gap: 8px;
    white-space: nowrap;
}

.bm-apps-item {
    gap: 9px;
}

.bm-apps {
    width: 35px;
}

.bm-account {
    width: 57px;
}

.bm-gmail {
    width: 39px;
}

.bm-youtube {
    width: 59px;
}

.bm-maps {
    width: 37px;
}

.bm-news {
    width: 38px;
}

.bm-dev {
    width: 114px;
}

.bm-translate {
    width: 64px;
}

.bm-fcc {
    width: 100px;
}

.bm-code {
    width: 152px;
    padding-right: 8px;
    text-align: right;
}

.bm-jeppe {
    width: 101px;
}

.bm-more {
    margin-left: auto;
    padding-right: 14px;
    font-size: 16px;
    font-weight: 700;
}

/* page */
.viewport {
    display: flex;
    flex: 1;
    min-height: 0;
}

.page {
    flex: 1;
    min-width: 0;
    overflow: hidden;
    border-top: 1px solid #5a93a8;
    background: linear-gradient(to bottom right, #00c4bf, #00a9d3 50%, #0084cf);
    color: #fff;
    font-family: "DejaVu Sans Mono", monospace;
    font-size: 13.3px;
    font-weight: 700;
    font-style: italic;
    line-height: 16px;
}

.page-title {
    margin: 37px 0 43px;
    padding-left: 50px;
    font-size: 41.5px;
    font-weight: 400;
    font-style: normal;
    line-height: 48px;
    text-align: center;
}

.intro {
    margin: 0 8px 16px;
    text-align: center;
}

.names {
    display: grid;
    grid-template-columns: 642px 643px;
    margin-top: 35px;
}

.names-title {
    margin: 0 0 21px;
    padding-left: 2px;
    font-size: 20px;
    line-height: 24px;
    text-align: center;
}

.names-list {
    margin: 0 -1px 0 0;
    padding-left: 41px;
    text-align: center;
}

.akan-form {
    margin-top: 20px;
}

.akan-fieldset {
    display: flex;
    flex-direction: column;
    align-items: center;
    margin: 0 2px;
    padding: 11px 0 0;
    border: 2px groove #d5e0e4;
}

.akan-legend {
    margin: 0 auto;
    padding: 0 5px;
    font-size: 20px;
    line-height: 24px;
}

.field-label {
    display: block;
    height: 16px;
    padding-right: 8px;
    line-height: 18px;
    text-align: center;
}

.field-wrap {
    position: relative;
}

.field {
    display: block;
    width: 181px;
    height: 21px;
    margin-bottom: 16px;
    padding: 1px 2px;
    border: 2px solid #7fa6bb;
    background: #fff;
}

.field-month {
    border-color: #808488 #fff #fff #808488;
}

.autofill-icon {
    position: absolute;
    right: 7px;
    top: 3px;
}

.gender-row {
    display: flex;
    align-items: center;
    margin: 4px 0 40px;
    padding-left: 18px;
}

.gender-radio {
    appearance: none;
    width: 12px;
    height: 12px;
    margin: -7px 0 0;
    border-radius: 50%;
    background: #dcdcdc;
    box-shadow: 0 0 1px #8aa;
}

.gender-label {
    margin: 0 13px 0 12px;
}

.scrollbar {
    position: relative;
    display: flex;
    flex-direction: column;
    align-items: center;
    width: 14px;
    flex-shrink: 0;
    background: #f1f1f1;
}

.scroll-up,
.scroll-down {
    width: 0;
    height: 0;
    border-left: 4px solid transparent;
    border-right: 4px solid transparent;
}

.scroll-up {
    margin-top: 6px;
    border-bottom: 4px solid #a3a3a3;
}

.scroll-thumb {
    width: 11px;
    height: 481px;
    margin-top: 5px;
    background: #c1c1c1;
}

.scroll-down {
    margin-top: auto;
    margin-bottom: 6px;
    border-top: 4px solid #505050;
}

.tooltip {
    position: absolute;
    left: 871px;
    top: 73px;
    width: 163px;
    height: 43px;
    padding: 3px 7px;
    border: 1px solid #2a2a2a;
    background: #fff;
    box-shadow: 0 1px 4px rgba(0, 0, 0, 0.25);
    color: #3a3c40;
    font-size: 14px;
    letter-spacing: 0.3px;
    line-height: 17px;
    white-space: nowrap;
}
```
